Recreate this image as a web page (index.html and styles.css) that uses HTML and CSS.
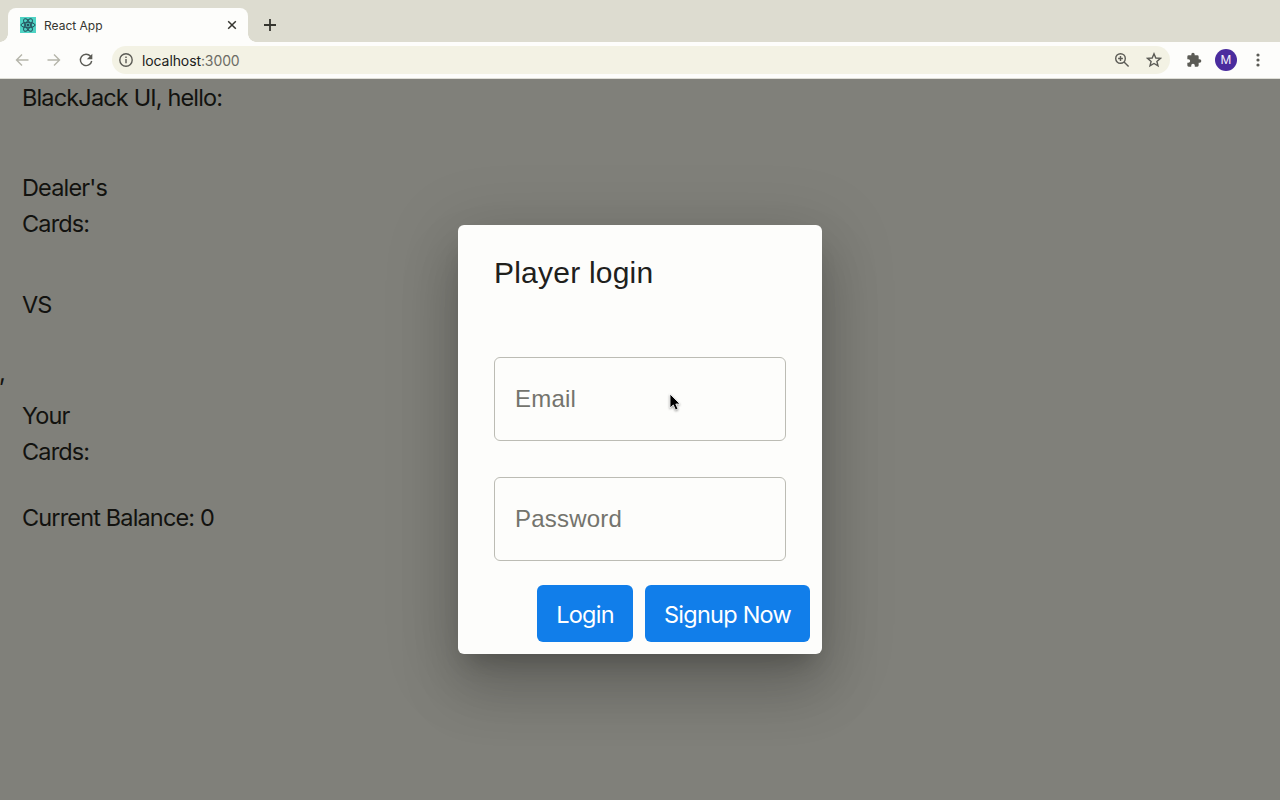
FILE: index.html
```html
<!DOCTYPE html>
<html lang="en">
<head>
<meta charset="utf-8">
<title>React App</title>
<link rel="stylesheet" href="styles.css">
</head>
<body>
<div class="browser">
  <header class="tabs">
    <div class="tab">
      <svg class="favicon" viewBox="0 0 16 16"><rect width="16" height="16" fill="#4fd3c4"/><g fill="none" stroke="#25505c" stroke-width="1"><ellipse cx="8" cy="8" rx="7" ry="2.7"/><ellipse cx="8" cy="8" rx="7" ry="2.7" transform="rotate(60 8 8)"/><ellipse cx="8" cy="8" rx="7" ry="2.7" transform="rotate(120 8 8)"/></g><circle cx="8" cy="8" r="1.5" fill="#25505c"/></svg>
      <span class="tab-title">React App</span>
      <svg class="close" viewBox="0 0 10 10"><path d="M1.2 1.2l7.6 7.6M8.8 1.2L1.2 8.8"/></svg>
    </div>
    <svg class="plus" viewBox="0 0 14 14"><path d="M7 1v12M1 7h12"/></svg>
  </header>
  <nav class="toolbar">
    <svg class="icon faded" viewBox="0 0 16 16"><path d="M14.5 8H2.500M8 2.500L2.500 8 8 13.500"/></svg>
    <svg class="icon faded" viewBox="0 0 16 16"><path d="M1.500 8h12M8 2.500L13.500 8 8 13.500"/></svg>
    <svg class="icon reload" viewBox="0 0 16 16"><path d="M12.5 4.3A5.7 5.7 0 1 0 13.7 9"/><path class="solid" d="M14.3 1.8v5.500H8.800z"/></svg>
    <div class="address">
      <svg class="info" viewBox="0 0 16 16"><circle cx="8" cy="8" r="6.2"/><path d="M8 7v4.2M8 4.6v1.5"/></svg>
      <span class="url">localhost<span class="port">:3000</span></span>
      <svg class="icon zoom" viewBox="0 0 16 16"><circle cx="6.5" cy="6.5" r="4.8"/><path d="M10 10l4.600 4.600M6.500 4.100v4.800M4.100 6.500h4.800"/></svg>
      <svg class="icon star" viewBox="0 0 16 16"><path d="M8 1.800l1.800 4.200 4.600.4-3.500 3 1.100 4.500L8 11.500l-4 2.400 1.100-4.500-3.500-3L6.200 6z"/></svg>
    </div>
    <svg class="icon puzzle" viewBox="0 0 24 24"><path class="solid" d="M20.5 11H19V7a2 2 0 0 0-2-2h-4V3.5a2.5 2.5 0 0 0-5 0V5H4a2 2 0 0 0-2 2v3.8h1.5a2.7 2.7 0 0 1 0 5.4H2V20a2 2 0 0 0 2 2h3.8v-1.5a2.7 2.7 0 0 1 5.4 0V22H17a2 2 0 0 0 2-2v-4h1.500a2.500 2.500 0 0 0 0-5z"/></svg>
    <span class="avatar">M</span>
    <svg class="icon dots" viewBox="0 0 16 16"><g class="solid"><circle cx="8" cy="3" r="1.6"/><circle cx="8" cy="8" r="1.6"/><circle cx="8" cy="13" r="1.6"/></g></svg>
  </nav>
  <main class="page">
    <p class="line hello">BlackJack UI, hello:</p>
    <p class="line dealer">Dealer's<br>Cards:</p>
    <p class="line versus">VS</p>
    <p class="stray">,</p>
    <p class="line yours">Your<br>Cards:</p>
    <p class="line balance">Current Balance: 0</p>
  </main>
</div>
<form class="dialog">
  <h2 class="title">Player login</h2>
  <div class="fields">
    <div class="field email">Email</div>
    <div class="field password">Password</div>
  </div>
  <div class="actions">
    <button class="button login" type="button">Login</button>
    <button class="button signup" type="button">Signup Now</button>
  </div>
</form>
<svg class="cursor" viewBox="0 0 12 18"><path d="M1 1v14l3.300-3.100 2.200 5.100 2.500-1-2.200-5H11z"/></svg>
</body>
</html>
```
FILE: styles.css
```css
* { box-sizing: border-box; }
body {
  margin: 0;
  width: 1280px;
  height: 800px;
  overflow: hidden;
  position: relative;
  font-family: Inter, sans-serif;
}
svg { display: block; flex: none; }
p, h2 { margin: 0; }
.browser { display: flex; flex-direction: column; height: 800px; }
.tabs {
  display: flex;
  height: 42px;
  padding: 8px 0 0 8px;
  background: #dddcd0;
}
.tab {
  position: relative;
  display: flex;
  align-items: center;
  width: 240px;
  height: 34px;
  padding: 0 11px 0 12px;
  background: #fdfdfb;
  border-radius: 8px 8px 0 0;
}
.tab::before, .tab::after {
  content: "";
  position: absolute;
  bottom: 0;
  width: 8px;
  height: 8px;
}
.tab::before { left: -8px; background: radial-gradient(circle at 0 0, transparent 7.5px, #fdfdfb 8px); }
.tab::after { right: -8px; background: radial-gradient(circle at 100% 0, transparent 7.5px, #fdfdfb 8px); }
.favicon { width: 16px; height: 16px; }
.tab-title { margin-left: 8px; font-size: 12px; color: #35352f; }
.close { width: 10px; height: 10px; margin-left: auto; fill: none; stroke: #35352f; stroke-width: 1.5; }
.plus { width: 14px; height: 14px; margin: 10px 0 0 15px; fill: none; stroke: #35352f; stroke-width: 1.8; }
.toolbar {
  display: flex;
  align-items: center;
  height: 37px;
  padding: 0 14px;
  background: #fdfdfb;
  border-bottom: 1px solid #deded6;
}
.icon { flex: none; width: 16px; height: 16px; margin-right: 16px; fill: none; stroke: #5b5b55; stroke-width: 1.4; }
.faded { stroke: #b5b5aa; }
.solid { fill: #5b5b55; stroke: none; }
.address {
  display: flex;
  flex: none;
  align-items: center;
  width: 1058px;
  height: 28px;
  margin: 0 16px 0 2px;
  padding-left: 6px;
  background: #f3f2e4;
  border-radius: 14px;
}
.info { width: 16px; height: 16px; fill: none; stroke: #5b5b55; stroke-width: 1.4; }
.url { margin-left: 8px; font-size: 14px; letter-spacing: -0.1px; color: #20201b; }
.port { color: #6c6c64; }
.zoom { margin-left: auto; }
.star { margin-right: 8px; }
.puzzle { margin-right: 13px; }
.avatar {
  flex: none;
  width: 22px;
  height: 22px;
  border-radius: 50%;
  background: #4a2c9e;
  color: #f4f1fa;
  font-size: 12px;
  line-height: 22px;
  text-align: center;
}
.dots { margin: 0 0 0 13px; }
.page { flex: 1; background: #80807a; color: #12120f; padding-top: 1px; }
.line { padding-left: 22px; font-size: 23.5px; line-height: 36px; letter-spacing: -0.85px; }
.dealer { margin-top: 54px; }
.versus { margin-top: 45px; }
.stray { margin-top: 32px; height: 36px; font-size: 24px; line-height: 36px; }
.stray { text-indent: -1px; }
.yours { margin-top: 7px; }
.balance { margin-top: 30px; }
.dialog {
  position: absolute;
  left: 458px;
  top: 225px;
  width: 364px;
  height: 429px;
  display: flex;
  flex-direction: column;
  background: #fdfdfb;
  border-radius: 6px;
  box-shadow: 0 16px 22px -10px rgba(0,0,0,.2), 0 36px 57px 4px rgba(0,0,0,.14), 0 13px 69px 12px rgba(0,0,0,.12);
  font-family: "Liberation Sans", Arial, sans-serif;
}
.title { padding: 24px 36px; font-size: 30px; line-height: 48px; font-weight: 400; letter-spacing: 0.22px; color: #20201c; }
.fields { display: flex; flex-direction: column; gap: 36px; padding: 36px 36px 24px; }
.field {
  height: 84px;
  padding: 0 20px;
  border: 1px solid #bcbcb4;
  border-radius: 6px;
  font-size: 24px;
  line-height: 82px;
  letter-spacing: 0.22px;
  color: #74746d;
}
.actions { display: flex; justify-content: flex-end; gap: 12px; padding-right: 12px; }
.button {
  height: 57px;
  padding: 2px 0 0;
  border: 0;
  border-radius: 6px;
  background: #117eea;
  color: #fff;
  font: 23.5px/55px Inter, sans-serif;
  letter-spacing: -0.75px;
}
.login { width: 96px; }
.signup { width: 165px; }
.cursor {
  position: absolute;
  left: 669px;
  top: 393px;
  width: 12px;
  height: 18px;
  fill: #000;
  stroke: #fff;
  stroke-width: 0.8;
  filter: drop-shadow(0 1px 1px rgba(0,0,0,.4));
}
```
